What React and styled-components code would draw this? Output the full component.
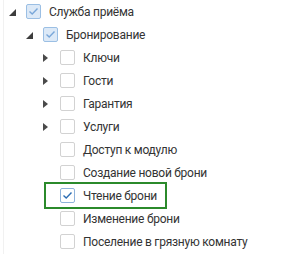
import styled, { createGlobalStyle } from "styled-components";

const GlobalStyle = createGlobalStyle`
  html, body {
    margin: 0;
    padding: 0;
    background: #fff;
  }
  body {
    font-family: Roboto, "Open Sans", sans-serif;
  }
`;

const items = [
  { level: 0, label: "Служба приёма", arrow: "open", checked: "partial" },
  { level: 1, label: "Бронирование", arrow: "open", checked: "partial" },
  { level: 2, label: "Ключи", arrow: "closed" },
  { level: 2, label: "Гости", arrow: "closed" },
  { level: 2, label: "Гарантия", arrow: "closed" },
  { level: 2, label: "Услуги", arrow: "closed" },
  { level: 2, label: "Доступ к модулю" },
  { level: 2, label: "Создание новой брони" },
  { level: 2, label: "Чтение брони", checked: "full", highlight: true },
  { level: 2, label: "Изменение брони" },
  { level: 2, label: "Поселение в грязную комнату" },
];

function Arrow({ type }) {
  if (type === "open") {
    return (
      <svg width="7" height="7" viewBox="0 0 7 7">
        <polygon points="7,0 7,7 0,7" fill="#3d3d3d" />
      </svg>
    );
  }
  if (type === "closed") {
    return (
      <svg width="5" height="8" viewBox="0 0 5 8">
        <polygon points="0,0 5,4 0,8" fill="#4a4a4a" />
      </svg>
    );
  }
  return null;
}

function Check({ state }) {
  return (
    <Box $state={state}>
      {state && (
        <svg width="11" height="9" viewBox="0 0 11 9">
          <polyline
            points="1.5,4.5 4.2,7 9.5,1.5"
            fill="none"
            stroke={state === "full" ? "#2c6db3" : "#79a7d9"}
            strokeWidth="1.4"
          />
        </svg>
      )}
    </Box>
  );
}

export default function App() {
  return (
    <>
      <GlobalStyle />
      <Panel>
        {items.map((it) => (
          <Row key={it.label}>
            <Indent $level={it.level} />
            <Content $hl={it.highlight}>
              <ArrowSlot $hl={it.highlight}>
                <Arrow type={it.arrow} />
              </ArrowSlot>
              <Check state={it.checked} />
              <Label>{it.label}</Label>
            </Content>
          </Row>
        ))}
      </Panel>
    </>
  );
}

const Panel = styled.div`
  width: 297px;
  height: 254px;
  margin-left: 3px;
  border-left: 1px solid #f1f1f1;
  box-sizing: border-box;
  overflow: hidden;
`;

const Row = styled.div`
  display: flex;
  align-items: center;
  height: 23px;
`;

const Indent = styled.div`
  flex: none;
  width: ${(p) => 5 + p.$level * 17}px;
`;

const Content = styled.div`
  display: flex;
  align-items: center;
  height: 23px;
  margin-left: ${(p) => (p.$hl ? 3 : 0)}px;
  padding-right: ${(p) => (p.$hl ? 8 : 0)}px;
  outline: ${(p) => (p.$hl ? "2px solid #2b8a2b" : "none")};
  outline-offset: 0;
`;

const ArrowSlot = styled.div`
  flex: none;
  width: ${(p) => (p.$hl ? 14 : 17)}px;
  display: flex;
  align-items: center;
  padding-top: 1px;
  box-sizing: border-box;
`;

const Box = styled.div`
  flex: none;
  width: 15px;
  height: 15px;
  box-sizing: border-box;
  border: 1px solid
    ${(p) =>
      p.$state === "partial" ? "#9bbfe4" : p.$state === "full" ? "#8fb2da" : "#d2d2d2"};
  border-radius: 2px;
  background: ${(p) => (p.$state === "partial" ? "#dce9f7" : "#fff")};
  display: flex;
  align-items: center;
  justify-content: center;
`;

const Label = styled.span`
  margin-left: 8px;
  font-size: 12px;
  letter-spacing: -0.25px;
  color: #333;
  white-space: nowrap;
`;
